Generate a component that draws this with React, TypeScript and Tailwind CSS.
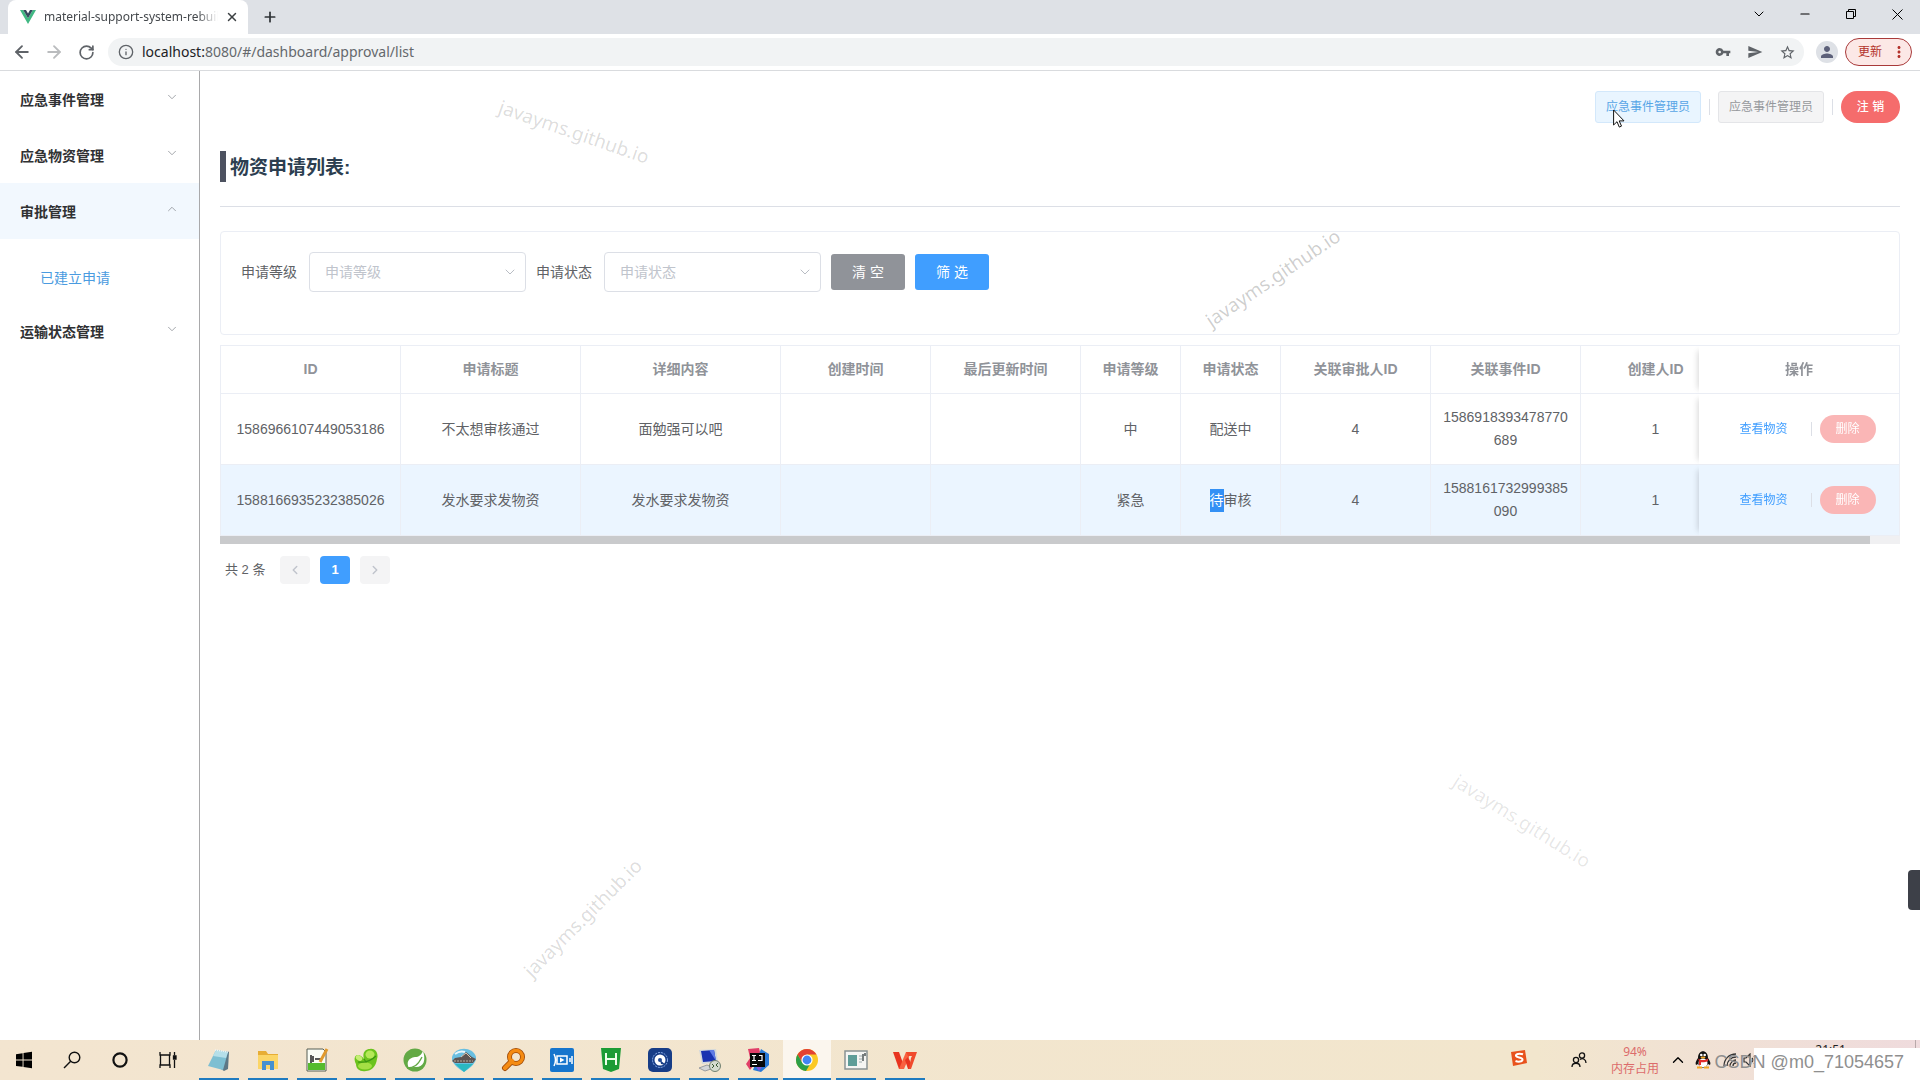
import type { ReactNode } from 'react'
import {
  ArrowLeft, ArrowRight, RotateCw, Info, ChevronDown, ChevronUp, ChevronLeft, ChevronRight,
  Minus, X, Plus,
} from 'lucide-react'
import { MdVpnKey, MdSend, MdStarBorder, MdPerson, MdMoreVert } from 'react-icons/md'

const columns = [
  { label: 'ID', width: 180 },
  { label: '申请标题', width: 180 },
  { label: '详细内容', width: 200 },
  { label: '创建时间', width: 150 },
  { label: '最后更新时间', width: 150 },
  { label: '申请等级', width: 100 },
  { label: '申请状态', width: 100 },
  { label: '关联审批人ID', width: 150 },
  { label: '关联事件ID', width: 150 },
  { label: '创建人ID', width: 150 },
]

const rows: { active: boolean; cells: ReactNode[] }[] = [
  {
    active: false,
    cells: ['1586966107449053186', '不太想审核通过', '面勉强可以吧', '', '', '中', '配送中', '4', '1586918393478770689', '1'],
  },
  {
    active: true,
    cells: [
      '1588166935232385026', '发水要求发物资', '发水要求发物资', '', '', '紧急',
      <><mark className="inline-block bg-[#3390f5] text-white">待</mark>审核</>,
      '4', '1588161732999385090', '1',
    ],
  },
]

function VueLogo() {
  return (
    <svg viewBox="0 0 16 14" className="h-[14px] w-4 shrink-0" aria-hidden="true">
      <path d="M0 0h3.2L8 8.2 12.8 0H16L8 14z" fill="#41b883" />
      <path d="M3.2 0H6l2 3.4L10 0h2.8L8 8.2z" fill="#35495e" />
    </svg>
  )
}

function BrowserChrome() {
  return (
    <header className="shrink-0 font-['Noto_Sans','Noto_Sans_CJK_SC',sans-serif]">
      <div className="flex h-[34px] items-stretch bg-[#dee1e6] pl-2">
        <div className="flex w-60 items-center rounded-t-lg bg-white pr-2 pl-3">
          <VueLogo />
          <span className="ml-2 w-[174px] overflow-hidden text-xs whitespace-nowrap text-[#45494d] [mask-image:linear-gradient(to_right,#000_88%,transparent)]">
            material-support-system-rebuild
          </span>
          <button aria-label="关闭标签页" className="ml-1.5 flex size-4 items-center justify-center text-[#3c4043]">
            <X className="size-3.5" strokeWidth={2.5} />
          </button>
        </div>
        <button aria-label="新标签页" className="ml-3 flex w-5 items-center justify-center text-[#2f3337]">
          <Plus className="size-4" strokeWidth={2.6} />
        </button>
        <div className="ml-auto flex h-7 items-center text-black">
          <button aria-label="搜索标签页" className="flex w-[46px] justify-center"><ChevronDown className="size-4" strokeWidth={1.5} /></button>
          <button aria-label="最小化" className="flex w-[46px] justify-center"><Minus className="size-3.5" strokeWidth={2} /></button>
          <button aria-label="还原" className="flex w-[46px] justify-center">
            <svg viewBox="0 0 10 10" className="size-2.5" fill="none" stroke="currentColor"><path d="M.5 2.5h7v7h-7zM2.5 2.5v-2h7v7h-2" /></svg>
          </button>
          <button aria-label="关闭" className="flex w-[46px] justify-center">
            <svg viewBox="0 0 11 11" className="size-[11px]" fill="none" stroke="currentColor"><path d="M.5.5l10 10M10.5.5l-10 10" /></svg>
          </button>
        </div>
      </div>
      <div className="flex h-[37px] items-center border-b border-[#d9dbde] bg-white pr-2 pl-3 text-[#5f6368]">
        <button aria-label="后退" className="mr-3 flex size-5 items-center justify-center"><ArrowLeft className="size-5" strokeWidth={2.2} /></button>
        <button aria-label="前进" className="mr-3 flex size-5 items-center justify-center text-[#babcbe]"><ArrowRight className="size-5" strokeWidth={2.2} /></button>
        <button aria-label="重新加载" className="mr-3 flex size-5 items-center justify-center"><RotateCw className="size-[17px]" strokeWidth={2.4} /></button>
        <div className="flex h-7 flex-1 items-center rounded-full bg-[#f1f3f4] pr-2 pl-2.5">
          <Info className="size-4 shrink-0" strokeWidth={2} />
          <div className="ml-2 flex-1 text-sm text-[#64686c]"><span className="text-[#202124]">localhost:</span>8080/#/dashboard/approval/list</div>
          <div className="flex items-center gap-4">
            <MdVpnKey className="size-4" /><MdSend className="size-4" /><MdStarBorder className="size-[17px]" />
          </div>
        </div>
        <span className="ml-3 flex size-[22px] items-center justify-center rounded-full bg-[#dee1e6]"><MdPerson className="size-[18px] text-[#5c6079]" /></span>
        <button className="ml-[7px] flex h-7 w-[67px] items-center rounded-full border border-[#a93a3a] bg-[#fce8e6] pl-3 text-xs text-[#b3322b]">
          更新<MdMoreVert className="ml-2 size-[18px]" />
        </button>
      </div>
    </header>
  )
}

function MenuHeading({ label, open }: { label: string; open?: boolean }) {
  return (
    <button
      aria-expanded={!!open}
      className={`flex h-14 w-full items-center justify-between pr-5 pl-5 text-sm font-bold text-[#303133] ${open ? 'bg-[#f2f8fe]' : ''}`}
    >
      <span className="pt-0.5">{label}</span>
      {open
        ? <ChevronUp className="mb-1 size-3.5 text-[#909399]" strokeWidth={1.4} />
        : <ChevronDown className="mb-1 size-3.5 text-[#909399]" strokeWidth={1.4} />}
    </button>
  )
}

function Sidebar() {
  return (
    <nav className="w-[200px] shrink-0 border-r border-[#a9a9ab]">
      <MenuHeading label="应急事件管理" />
      <MenuHeading label="应急物资管理" />
      <MenuHeading label="审批管理" open />
      <a href="#list" className="mt-3.5 flex h-[50px] items-center pl-10 text-sm text-[#4a9be0]">已建立申请</a>
      <MenuHeading label="运输状态管理" />
    </nav>
  )
}

function FilterSelect({ id, label }: { id: string; label: string }) {
  return (
    <div className="mr-2.5 flex items-center">
      <label htmlFor={id} className="pr-3 text-[#606266]">{label}</label>
      <div className="relative">
        <select id={id} className="h-10 w-[217px] appearance-none rounded border border-[#dcdfe6] bg-white px-[15px] text-[#c0c4cc]">
          <option>{label}</option>
        </select>
        <ChevronDown className="pointer-events-none absolute top-3 right-2 size-4 text-[#b4b8c0]" strokeWidth={1.4} />
      </div>
    </div>
  )
}

function RequestTable() {
  return (
    <div className="mt-[10px]">
      <div className="overflow-hidden border-t border-r border-l border-[#ebeef5]">
        <table className="w-[1710px] min-w-full table-fixed border-separate border-spacing-0 text-center text-sm leading-[23px]">
          <colgroup>
            {columns.map((c) => <col key={c.label} style={{ width: c.width }} />)}
            <col className="w-[200px]" />
          </colgroup>
          <thead>
            <tr className="h-12 text-[#909399]">
              {columns.map((c) => (
                <th key={c.label} className="border-r border-b border-[#ebeef5] px-2.5 font-bold">{c.label}</th>
              ))}
              <th className="sticky right-0 border-b border-[#ebeef5] bg-white font-bold shadow-[-6px_0_6px_-5px_rgba(0,0,0,0.16)]">操作</th>
            </tr>
          </thead>
          <tbody className="text-[#606266]">
            {rows.map((r, i) => (
              <tr key={i} className={r.active ? 'bg-[#ebf5ff]' : 'bg-white'}>
                {r.cells.map((cell, j) => (
                  <td key={j} className="h-[71px] border-r border-b border-[#ebeef5] px-2.5 break-all">{cell}</td>
                ))}
                <td className="sticky right-0 border-b border-[#ebeef5] bg-inherit shadow-[-6px_0_6px_-5px_rgba(0,0,0,0.16)]">
                  <div className="flex items-center justify-center pl-0.5 text-xs">
                    <button className="px-[15px] text-[#409eff]">查看物资</button>
                    <span className="mx-2 h-3.5 w-px bg-[#dcdfe6]" />
                    <button className="h-7 w-14 rounded-full bg-[#fab6b6] text-white">删除</button>
                  </div>
                </td>
              </tr>
            ))}
          </tbody>
        </table>
      </div>
      <div className="h-2 bg-[#f0f0f2]"><div className="h-full w-[98.2%] bg-[#c9cacc]" /></div>
    </div>
  )
}

function Pagination() {
  return (
    <div className="mt-3 flex items-center gap-2.5 pl-[5px] text-[13px]">
      <span className="w-[45px] text-[#606266]">共 2 条</span>
      <button aria-label="上一页" className="flex h-7 w-[30px] items-center justify-center rounded-sm bg-[#f4f4f5] text-[#c0c4cc]"><ChevronLeft className="size-3.5" strokeWidth={2.5} /></button>
      <button className="h-7 w-[30px] rounded-sm bg-[#409eff] font-bold text-white">1</button>
      <button aria-label="下一页" className="flex h-7 w-[30px] items-center justify-center rounded-sm bg-[#f4f4f5] text-[#c0c4cc]"><ChevronRight className="size-3.5" strokeWidth={2.5} /></button>
    </div>
  )
}

function Cursor() {
  return (
    <svg viewBox="0 0 12 19" className="absolute top-[17px] left-[17px] h-[19px] w-3" aria-hidden="true">
      <path d="M.6 1v15l3.4-3.3 2.3 5.4 2.2-1-2.3-5.2h4.8z" fill="#fff" stroke="#111" />
    </svg>
  )
}

function Main() {
  return (
    <main className="min-w-0 flex-1 px-5 pt-5">
      <div className="flex items-center justify-end text-xs">
        <button className="relative h-8 w-[106px] rounded-[3px] border border-[#d3e8fb] bg-[#e9f5ff] text-[#57a5e6]">
          应急事件管理员
          <Cursor />
        </button>
        <span className="mx-2 h-4 w-px bg-[#dcdfe6]" />
        <button className="h-8 w-[106px] rounded-[3px] border border-[#e4e5e8] bg-[#f4f4f5] text-[#96989c]">应急事件管理员</button>
        <span className="mx-2 h-4 w-px bg-[#dcdfe6]" />
        <button className="h-8 w-[59px] rounded-full bg-[#f56c6c] font-medium text-white">注 销</button>
      </div>
      <h3 className="mt-7 flex h-[31px] items-center border-l-[6px] border-[#4d5260] pt-1 pl-1 text-[19px] font-bold text-[#2c3e50]">
        物资申请列表:
      </h3>
      <hr className="mt-6 border-[#dcdfe6]" />
      <form className="mt-6 flex items-center rounded border border-[#ebeef5] px-5 pt-5 pb-[42px] text-sm">
        <FilterSelect id="level" label="申请等级" />
        <FilterSelect id="status" label="申请状态" />
        <button type="button" className="h-9 w-[74px] rounded-[3px] bg-[#909399] text-white">清 空</button>
        <button type="button" className="ml-2.5 h-9 w-[74px] rounded-[3px] bg-[#409eff] text-white">筛 选</button>
      </form>
      <RequestTable />
      <Pagination />
    </main>
  )
}

const watermark = "pointer-events-none absolute -translate-x-1/2 -translate-y-1/2 font-['Noto_Sans',sans-serif] text-[19px]"

function Watermarks() {
  return (
    <>
      <span className={`${watermark} top-[132px] left-[574px] rotate-[19deg] text-black/15`}>javayms.github.io</span>
      <span className={`${watermark} top-[278px] left-[1273px] -rotate-[34deg] text-black/20`}>javayms.github.io</span>
      <span className={`${watermark} top-[821px] left-[1522px] rotate-[32deg] text-black/10`}>javayms.github.io</span>
      <span className={`${watermark} top-[918px] left-[583px] -rotate-45 text-black/15`}>javayms.github.io</span>
    </>
  )
}

function Svg({ children }: { children: ReactNode }) {
  return <svg viewBox="0 0 24 24" className="size-6" fill="none" aria-hidden="true">{children}</svg>
}

const systemIcons: { name: string; art: ReactNode }[] = [
  { name: '开始', art: <path d="M4 6.2l6.6-1v6.3H4zM11.5 5L20 3.8v7.7h-8.5zM4 12.5h6.6v6.3L4 17.9zM11.5 12.5H20v7.7l-8.5-1.2z" fill="#000" /> },
  { name: '搜索', art: <g stroke="#111" strokeWidth="1.4"><circle cx="14.5" cy="9.5" r="5.3" /><path d="M10.7 13.3L4 20" /></g> },
  { name: 'Cortana', art: <circle cx="12" cy="12" r="6.6" stroke="#111" strokeWidth="2.2" /> },
  { name: '任务视图', art: <g stroke="#111" strokeWidth="1.3"><path d="M4 4v3h10V4M4 20v-3h10v3M4.5 7v10M13.5 7v10M18.5 4v3.5M18.5 12v8" /><path d="M17.5 8h2.5v3h-2.500z" fill="#111" /></g> },
]

const appIcons: { name: string; open?: boolean; art: ReactNode }[] = [
  { name: '记事本', art: <><path d="M20 3l2 1-1 17-4 2-3-2z" fill="#5d7785" /><path d="M9 2l12 2-5 18L1 18z" fill="#7dbfd2" /><path d="M9 2l12 2-2 6L6 8z" fill="#b5dfe9" /><path d="M8 2l13 2" stroke="#eef4f6" strokeWidth="1.5" strokeDasharray="1 1" /></> },
  { name: '文件资源管理器', art: <><path d="M2 3h8l2 3h10v14H2z" fill="#e7ad35" /><path d="M2 7h20v14H2z" fill="#fbd567" /><path d="M6 22v-9h12v9h-4v-5h-4v5z" fill="#4590cf" /></> },
  { name: '编辑器', art: <><path d="M2 1h16l3 3v19H2z" fill="#fafdf5" stroke="#575f55" /><path d="M3 15h17v7H3z" fill="#55bb2d" /><path d="M6 7v8M8 8v6M10 11h7" stroke="#222" strokeWidth="1.5" /><path d="M22 1L15 14" stroke="#e19a2e" strokeWidth="3" /></> },
  { name: 'Navicat', art: <><path d="M1 9C3 5 8 8 10 11 8 5 11 1 16 1c5-1 9 4 7 10-1 8-6 12-11 12C6 24 2 21 2 16c-1-2-2-5-1-7z" fill="#6cc31d" /><ellipse cx="5" cy="10" rx="3.500" ry="2.500" fill="#c6ee74" transform="rotate(35 5 10)" /><ellipse cx="16" cy="6.500" rx="4.500" ry="4" fill="#b5e858" /><ellipse cx="11" cy="18" rx="7" ry="3.500" fill="#a5df45" /><path d="M4 14c8 1 13-1 18-6M10 11c1 2 2 3 3 3" stroke="#3b9413" strokeWidth="1.200" /></> },
  { name: 'Spring', art: <><circle cx="12" cy="12" r="11.500" fill="#63a945" /><path d="M20 3c3 9 1 16-7 16-3 0-5 0-7 1C3 15 5 10 12 9c4 0 6-2 8-6z" fill="#fff" /><path d="M4 20c7 0 11-3 15-11" stroke="#63a945" strokeWidth="1.300" /></> },
  { name: '船', art: <><path d="M0 9C3-2 21-2 24 9c1 6-7 12-12 15C6 21-1 15 0 9z" fill="#69bfe1" /><path d="M3 6c4-3 7-3 10-2" stroke="#e9f6fb" strokeWidth="2" /><path d="M0 13l3-3 6-1 5-5 6 5 4 2-3 4H3z" fill="#5c5553" /><path d="M9 9l5-4 5 5" stroke="#d9c6b2" /><path d="M2 13h19" stroke="#b9aca0" strokeDasharray="2 1" /><path d="M3 16h18l-9 8z" fill="#2ab8c1" /></> },
  { name: '搜索工具', art: <><path d="M10 14L4 20" stroke="#9c4706" strokeWidth="6" strokeLinecap="round" /><circle cx="15" cy="9" r="6.500" stroke="#9c4706" strokeWidth="5" /><path d="M11 13L4 20" stroke="#f58b12" strokeWidth="4.200" strokeLinecap="round" /><circle cx="15" cy="9" r="6.500" stroke="#f58b12" strokeWidth="3.400" /></> },
  { name: '录屏', art: <><rect width="24" height="24" rx="2" fill="#1675cd" /><path d="M4 6c2 4 2 8 0 12M7 8h10v8H7zM20 10v4M22 8v8" stroke="#fff" strokeWidth="1.500" /><path d="M10 9.500l4.500 2.500-4.500 2.500z" fill="#fff" /></> },
  { name: 'HBuilder', art: <><path d="M2 0h20l-2 21-8 3-8-3z" fill="#1c9c35" /><path d="M7 5v12M17 5v12M7 11h10" stroke="#edffe9" strokeWidth="2" /></> },
  { name: '云盘', art: <><rect width="24" height="24" rx="5" fill="#173d87" /><circle cx="12" cy="12" r="7.500" stroke="#8eb0eb" strokeDasharray="2 1" /><circle cx="12" cy="12" r="5.500" fill="#fff" /><path d="M12 12l6 5-5-1z" fill="#173d87" /><circle cx="12" cy="12" r="2" fill="#234b96" /></> },
  { name: '远程连接', art: <><path d="M2 2l17-1 2 13-16 2z" fill="#d2d8dc" /><path d="M4 3l13-1 2 11-13 1z" fill="#1933b1" /><path d="M12 2l5 0 2 11z" fill="#5f7be5" /><path d="M2 20l8-3 7 3-9 3z" fill="#d3d5d7" stroke="#979ba0" /><circle cx="18" cy="18" r="5.500" fill="#d4dccf" stroke="#718070" /><path d="M15 16l2 2-2 2M21 15l-2 2 2 2" stroke="#385a34" /></> },
  { name: 'IntelliJ IDEA', art: <><path d="M2 1l11-1 2 8-11 14-4-6 4-6z" fill="#e13f68" /><path d="M15 1l8 5v11l-8 7-8-2z" fill="#2979d5" /><path d="M8 16h10l-5 7z" fill="#8858d8" /><path d="M4 5h15v14H4z" fill="#080808" /><path d="M6 7.500h4M8 7.500v5M6 12.500h4M13 7.500h3v5h-4M6 16.500h5" stroke="#fff" strokeWidth="1.200" /></> },
  { name: 'Chrome', open: true, art: <><circle cx="12" cy="12" r="11" fill="#fbc924" /><path d="M2.500 6.500A11 11 0 0121.500 6.500H12L7.300 14.800z" fill="#e34133" /><path d="M2.500 6.500A11 11 0 0011 23l5-8.500-4 2-4.700-1.700z" fill="#2c9f48" /><circle cx="12" cy="12" r="5.600" fill="#fff" /><circle cx="12" cy="12" r="4.400" fill="#4285f4" /></> },
  { name: '阅读器', art: <><path d="M1 3h22v18H1z" fill="#f5f5f3" stroke="#899294" strokeWidth="1.500" /><path d="M4 7h9v11H4z" fill="#5e9d98" /><path d="M15 8h3M15 11h3M15 14h3" stroke="#9caaac" /><path d="M19 6v7M21 5v3" stroke="#4d5557" strokeWidth="1.500" /></> },
  { name: 'WPS', art: <><path d="M0 4h6l5 14-3 3H6z" fill="#e8341f" /><path d="M6 21L13 4h4l-1 5-5 12z" fill="#f9603f" /><path d="M12 12l3-3 3 6-1 6h-2z" fill="#e8341f" /><path d="M13 4h11l-6 17h-2l2-11 1-2h-4z" fill="#f04a2d" /></> },
]

function Taskbar() {
  return (
    <footer className="relative flex h-10 shrink-0 items-stretch overflow-hidden bg-linear-to-r from-[#f3e5d0] via-[#f2e6cd] via-80% to-[#efdbdd] font-['Noto_Sans','Noto_Sans_CJK_SC',sans-serif]">
      {systemIcons.map((icon) => (
        <button key={icon.name} aria-label={icon.name} className="flex w-12 items-center justify-center"><Svg>{icon.art}</Svg></button>
      ))}
      <div className="ml-[3px] flex gap-px">
        {appIcons.map((icon) => (
          <button key={icon.name} aria-label={icon.name} className={`flex w-12 flex-col items-center pt-2 ${icon.open ? 'bg-[#fbf6ee]' : ''}`}>
            <Svg>{icon.art}</Svg>
            <span className={`mt-auto h-0.5 bg-[#1f7bc0] ${icon.open ? 'w-full' : 'w-10'}`} />
          </button>
        ))}
      </div>
      <div className="mr-[163px] ml-auto flex items-center">
        <svg viewBox="0 0 16 16" className="mb-1 size-4" aria-hidden="true">
          <path d="M0 2l14-2 2 13-14 3z" fill="#e8521c" />
          <path d="M12 4.300C8 3 4.500 4 5 6s6.500 1 6.500 3.500S7 12 4.500 11" fill="none" stroke="#fff" strokeWidth="2" />
        </svg>
        <svg viewBox="0 0 16 16" className="ml-11 size-4" fill="none" stroke="#111" strokeWidth="1.300" aria-hidden="true">
          <circle cx="5" cy="8" r="2.600" /><path d="M1 15c0-5 8-5 8 0" /><circle cx="11" cy="3.500" r="2.600" /><path d="M9 7.500c3-2 6 0 6 3.500" />
        </svg>
        <div className="ml-6 w-12 text-center text-xs leading-[17px] text-[#dc6b6b]">94%<br />内存占用</div>
        <ChevronUp className="ml-2.5 size-[18px] text-black" strokeWidth={1.800} />
        <svg viewBox="0 0 16 18" className="ml-2 h-[18px] w-4" aria-hidden="true">
          <path d="M3 7c0-9 10-9 10 0 2 3 3 5 2 7l-2-1-3 4H6l-3-4-2 1C0 12 1 10 3 7z" fill="#111" />
          <ellipse cx="8" cy="12" rx="4.500" ry="4.500" fill="#fff" />
          <path d="M3 7.500c3 2 7 2 10 0v2.500c-3 1.500-5 1.500-7 1.200V14H4V10z" fill="#e22d2d" />
          <circle cx="6.300" cy="4" r="1.300" fill="#fff" /><circle cx="9.700" cy="4" r="1.300" fill="#fff" />
          <ellipse cx="8" cy="6.500" rx="2.500" ry="1" fill="#f5a623" /><path d="M2 16.500h5M9 16.500h5" stroke="#f5a623" strokeWidth="2" />
        </svg>
        <svg viewBox="0 0 14 14" className="ml-3 size-3.5" fill="none" stroke="#333" strokeWidth="1.300" aria-hidden="true">
          <path d="M1 13C1 6 6 1 13 1M4 13c0-5 4-9 9-9M7 13c0-3 3-6 6-6M10 13c0-2 1-3 3-3" />
        </svg>
        <svg viewBox="0 0 14 14" className="ml-1.5 size-3.5" fill="none" stroke="#333" strokeWidth="1.200" aria-hidden="true">
          <path d="M1 5h2l4-4v12L3 9H1zM9 5c1 1 1 3 0 4M11 3c2 2 2 6 0 8" />
        </svg>
      </div>
      <time className="absolute top-0.5 right-[74px] text-xs leading-4 text-[#222]">21:51</time>
      <div className="absolute right-0 bottom-0 h-8 w-[166px] bg-white" />
      <span className="absolute right-4 bottom-1.5 font-['Liberation_Sans',sans-serif] text-[18px] leading-6 text-[#8f8f8f]">CSDN @m0_71054657</span>
      <span className="absolute top-0 right-1 h-2 w-px bg-[#b8a9aa]" />
    </footer>
  )
}

export default function App() {
  return (
    <div className="relative flex h-screen flex-col overflow-hidden bg-white font-['Liberation_Sans','Noto_Sans_CJK_SC',sans-serif]">
      <BrowserChrome />
      <div className="flex min-h-0 flex-1">
        <Sidebar />
        <Main />
      </div>
      <Taskbar />
      <Watermarks />
      <div className="absolute top-[870px] right-0 h-10 w-3 rounded-l-[4px] bg-[#3d4048]" />
    </div>
  )
}
